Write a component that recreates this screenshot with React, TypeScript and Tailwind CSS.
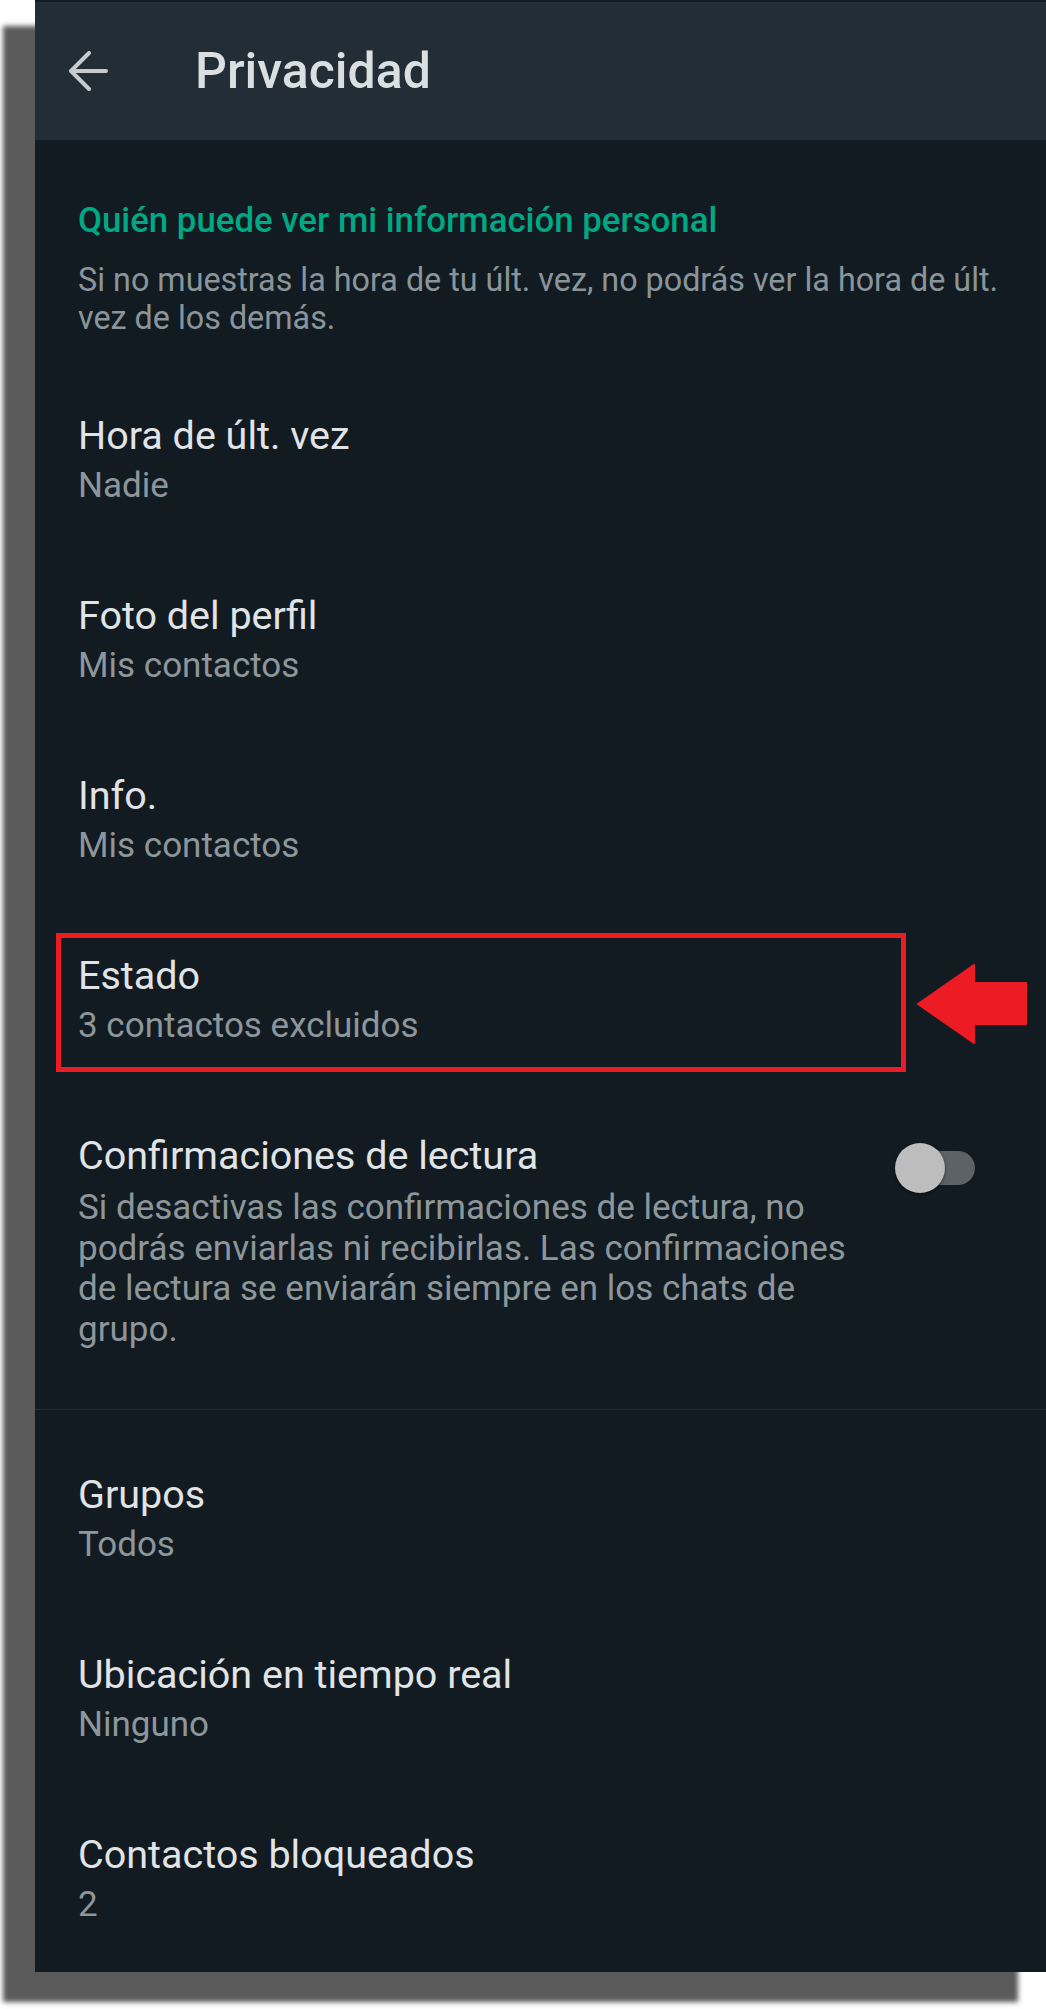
import React from 'react';

type Setting = {
  title: string;
  value: string;
  highlight?: boolean;
};

const personalInfo: Setting[] = [
  { title: 'Hora de últ. vez', value: 'Nadie' },
  { title: 'Foto del perfil', value: 'Mis contactos' },
  { title: 'Info.', value: 'Mis contactos' },
  { title: 'Estado', value: '3 contactos excluidos', highlight: true },
];

const moreSettings: Setting[] = [
  { title: 'Grupos', value: 'Todos' },
  { title: 'Ubicación en tiempo real', value: 'Ninguno' },
  { title: 'Contactos bloqueados', value: '2' },
];

const BackArrow: React.FC = () => (
  <svg width="40" height="40" viewBox="0 0 40 40" fill="none" className="shrink-0">
    <path
      d="M38 20H3M21 2L3 20l18 18"
      stroke="#c5cbce"
      strokeWidth="4"
      strokeLinecap="round"
      strokeLinejoin="round"
    />
  </svg>
);

// red call-out arrow pointing left at the highlighted row
const CalloutArrow: React.FC = () => (
  <svg
    width="110"
    height="80"
    viewBox="0 0 110 80"
    className="absolute left-[882px] top-[53px]"
  >
    <path
      d="M1 40L57 1V19H109V60H57V79Z"
      fill="#ed1c24"
      stroke="#ed1c24"
      strokeWidth="2"
      strokeLinejoin="round"
    />
  </svg>
);

const Toggle: React.FC = () => (
  <div className="relative mt-[12px] h-[50px] w-[80px] shrink-0">
    <div className="absolute right-0 top-[8px] h-[34px] w-[70px] rounded-full bg-[#5b6368]" />
    <div className="absolute left-0 top-0 h-[50px] w-[50px] rounded-full bg-[#bdbdbd] shadow-[0_1px_3px_rgba(0,0,0,0.6)]" />
  </div>
);

const SettingRow: React.FC<{ item: Setting }> = ({ item }) => (
  <div className="relative px-[43px] py-[40px]">
    <div className="text-[39.5px] leading-[50px] text-[#e1e4e6]">{item.title}</div>
    <div className="text-[35px] leading-[50px] text-[#8d969b]">{item.value}</div>
    {item.highlight && (
      <>
        <div className="absolute left-[21px] top-[22px] h-[139px] w-[850px] border-[5px] border-[#ed1c24]" />
        <CalloutArrow />
      </>
    )}
  </div>
);

const App: React.FC = () => {
  return (
    <div className="h-[2009px] w-[1046px] overflow-hidden bg-white pl-[35px] font-['Roboto',_'Noto_Sans',_sans-serif]">
      <div className="h-[1972px] w-[1011px] bg-[#111b21] shadow-[-30px_28px_5px_2px_#5a5a5a]">
        {/* App bar */}
        <div className="pt-[2px]">
          <div className="flex h-[138px] items-center bg-[#222d35] pl-[33px]">
            <BackArrow />
            <h1 className="ml-[87px] text-[50px] font-medium leading-none text-[#dadfe2]">
              Privacidad
            </h1>
          </div>
        </div>

        {/* Section header */}
        <div className="pb-[34px] pl-[43px] pr-[16px] pt-[60px]">
          <h2 className="text-[34.8px] font-medium leading-[40px] text-[#00a884]">
            Quién puede ver mi información personal
          </h2>
          <p className="mt-[22px] text-[32.3px] leading-[37.5px] text-[#8a959b]">
            Si no muestras la hora de tu últ. vez, no podrás ver la hora de últ. vez de los demás.
          </p>
        </div>

        {personalInfo.map((item) => (
          <SettingRow key={item.title} item={item} />
        ))}

        {/* Read receipts */}
        <div className="flex gap-[26px] pb-[58px] pl-[43px] pr-[71px] pt-[40px]">
          <div className="flex-1">
            <div className="text-[39.5px] leading-[50px] text-[#e1e4e6]">
              Confirmaciones de lectura
            </div>
            <p className="mt-[7px] text-[35px] leading-[40.7px] text-[#8d969b]">
              Si desactivas las confirmaciones de lectura, no podrás enviarlas ni recibirlas. Las
              confirmaciones de lectura se enviarán siempre en los chats de grupo.
            </p>
          </div>
          <Toggle />
        </div>

        <div className="h-px bg-[#222d34]" />

        <div className="pt-[20px]">
          {moreSettings.map((item) => (
            <SettingRow key={item.title} item={item} />
          ))}
        </div>
      </div>
    </div>
  );
};

export default App;
